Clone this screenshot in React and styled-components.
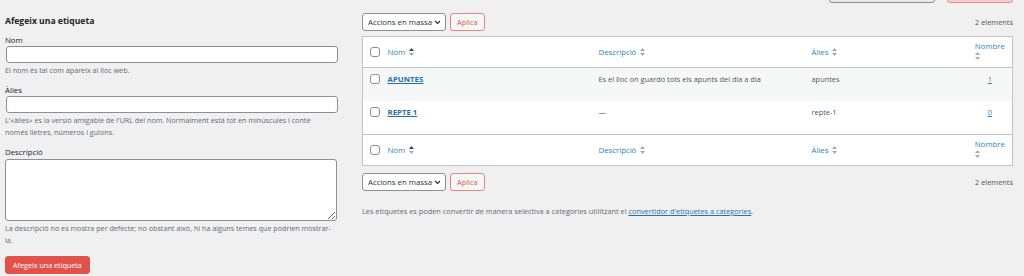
import React from "react";
import styled, { createGlobalStyle } from "styled-components";

const GlobalStyle = createGlobalStyle`
  body {
    margin: 0;
    background: #f0f0f1;
    font-family: "Open Sans", "Noto Sans", sans-serif;
    font-size: 7.8px;
    color: #3c434a;
  }
`;

const Page = styled.div`
  display: flex;
  gap: 25px;
  padding: 0 11px 0 5px;
  height: 276px;
  overflow: hidden;
`;

const LeftCol = styled.div`
  width: 332px;
  flex-shrink: 0;
  padding-top: 15px;
`;

const Heading = styled.h2`
  margin: 0 0 7px;
  font-size: 8.6px;
  line-height: 12px;
  font-weight: 700;
  color: #1d2327;
`;

const Field = styled.div`
  margin-bottom: 7px;
`;

const Label = styled.label`
  display: block;
  color: #1d2327;
  line-height: 12px;
`;

const TextInput = styled.input`
  display: block;
  box-sizing: border-box;
  width: 332px;
  height: 17px;
  margin: 0 0 0 1px;
  border: 1px solid #8c8f94;
  border-radius: 3px;
  background: #fff;
`;

const TextArea = styled.textarea`
  display: block;
  box-sizing: border-box;
  width: 332px;
  height: 62px;
  margin: 1px 0 0;
  border: 1px solid #8c8f94;
  border-radius: 3px;
  background: #fff;
  resize: both;
`;

const Help = styled.p`
  margin: 1px 0 0;
  color: #646970;
  font-size: 7.2px;
  line-height: 12.5px;
`;

const PrimaryButton = styled.button`
  font-family: inherit;
  font-size: 7.2px;
  color: #fff;
  background: #e2524a;
  border: 1px solid #e2524a;
  border-radius: 3px;
  height: 18px;
  padding: 0 7px;
  margin-top: 2px;
`;

const RightCol = styled.div`
  flex: 1;
  display: flex;
  flex-direction: column;
`;

const SearchRow = styled.div`
  display: flex;
  justify-content: flex-end;
  align-items: flex-end;
  gap: 12px;
  height: 3px;
  overflow: hidden;
`;

const SearchBox = styled.div`
  width: 106px;
  height: 20px;
  box-sizing: border-box;
  border: 1px solid #8c8f94;
  background: #e8e8e8;
  border-radius: 3px;
`;

const SearchButton = styled.div`
  width: 66px;
  height: 20px;
  box-sizing: border-box;
  border: 1px solid #f08a84;
  background: #f6cfcc;
  border-radius: 3px;
`;

const NavRow = styled.div`
  display: flex;
  align-items: center;
  gap: 4px;
  margin: ${(p) => p.$margin};
`;

const Select = styled.div`
  display: flex;
  align-items: center;
  justify-content: space-between;
  box-sizing: border-box;
  width: 84px;
  height: 18px;
  padding: 0 4px 0 5px;
  background: #fff;
  border: 1px solid #8c8f94;
  border-radius: 3px;
  color: #2c3338;
  font-size: 7.8px;
  white-space: nowrap;
`;

const ApplyButton = styled.button`
  font-family: inherit;
  font-size: 7.4px;
  color: #e2524a;
  background: #f6f7f7;
  border: 1px solid #e98580;
  border-radius: 3px;
  height: 18px;
  padding: 0 6px;
`;

const Count = styled.span`
  margin-left: auto;
  color: #50575e;
  font-size: 7.4px;
`;

const Table = styled.table`
  width: 651px;
  border-collapse: collapse;
  table-layout: fixed;
  background: #fff;
  border: 1px solid #c3c4c7;
`;

const HeadCell = styled.th`
  text-align: ${(p) => (p.$center ? "center" : "left")};
  font-weight: 400;
  padding: 0 6px;
  height: 31px;
  box-sizing: border-box;
  vertical-align: middle;
  border-${(p) => p.$side}: 1px solid #c3c4c7;
`;

const Row = styled.tr`
  background: ${(p) => (p.$alt ? "#f6f7f7" : "#fff")};
`;

const Cell = styled.td`
  text-align: ${(p) => (p.$center ? "center" : "left")};
  vertical-align: top;
  padding: 6px 6px 0;
  height: 27px;
  color: #50575e;
  font-size: 7.4px;
`;

const CheckCell = styled.td`
  padding: 6px 0 0 7px;
  vertical-align: top;
`;

const CheckHead = styled.th`
  padding: 0 0 0 7px;
  vertical-align: middle;
  border-${(p) => p.$side}: 1px solid #c3c4c7;
`;

const Checkbox = styled.span`
  display: block;
  width: 10px;
  height: 10px;
  box-sizing: border-box;
  border: 1px solid #8c8f94;
  border-radius: 3px;
  background: #fff;
`;

const SortLink = styled.span`
  color: #2a84c2;
  font-size: 7.8px;
  display: inline-flex;
  align-items: center;
  gap: 4px;
`;

const StackedSort = styled.span`
  display: inline-block;
  text-align: left;
  color: #2a84c2;
  font-size: 7.8px;
  line-height: 11px;
`;

const RowTitle = styled.a`
  color: #2271b1;
  font-weight: 700;
  font-size: 7.8px;
  text-decoration: underline;
`;

const NumLink = styled.a`
  color: #2a84c2;
  text-decoration: underline;
`;

const Note = styled.p`
  margin: 15px 0 0;
  color: #646970;
  font-size: 7.35px;
  a {
    color: #2271b1;
    text-decoration: underline;
  }
`;

const SortIcon = ({ active }) => (
  <svg width="5" height="8" viewBox="0 0 5 8">
    <path d="M2.5 0 L5 3 L0 3 Z" fill={active ? "#3c434a" : "#a7aaad"} />
    <path d="M0 5 L5 5 L2.5 8 Z" fill="#a7aaad" />
  </svg>
);

const Chevron = () => (
  <svg width="7" height="5" viewBox="0 0 7 5">
    <path d="M1 1 L3.5 3.5 L6 1" fill="none" stroke="#2c3338" strokeWidth="1.2" />
  </svg>
);

const HeaderRow = ({ side }) => (
  <tr>
    <CheckHead $side={side}>
      <Checkbox />
    </CheckHead>
    <HeadCell $side={side}>
      <SortLink>
        Nom <SortIcon active />
      </SortLink>
    </HeadCell>
    <HeadCell $side={side}>
      <SortLink>
        Descripció <SortIcon />
      </SortLink>
    </HeadCell>
    <HeadCell $side={side}>
      <SortLink>
        Àlies <SortIcon />
      </SortLink>
    </HeadCell>
    <HeadCell $side={side} $center>
      <StackedSort>
        Nombre
        <br />
        <SortIcon />
      </StackedSort>
    </HeadCell>
  </tr>
);

const tags = [
  { name: "APUNTES", desc: "Es el lloc on guardo tots els apunts del dia a dia", slug: "apuntes", count: 1 },
  { name: "REPTE 1", desc: "—", slug: "repte-1", count: 0 },
];

const Bulk = ({ margin }) => (
  <NavRow $margin={margin}>
    <Select>
      Accions en massa <Chevron />
    </Select>
    <ApplyButton>Aplica</ApplyButton>
    <Count>2 elements</Count>
  </NavRow>
);

export default function App() {
  return (
    <>
      <GlobalStyle />
      <Page>
        <LeftCol>
          <Heading>Afegeix una etiqueta</Heading>
          <Field>
            <Label>Nom</Label>
            <TextInput />
            <Help>El nom és tal com apareix al lloc web.</Help>
          </Field>
          <Field>
            <Label>Àlies</Label>
            <TextInput />
            <Help>
              L'«àlies» es la versió amigable de l'URL del nom. Normalment està tot en minúscules i conté
              <br />
              només lletres, números i guions.
            </Help>
          </Field>
          <Field>
            <Label>Descripció</Label>
            <TextArea />
            <Help>
              La descripció no es mostra per defecte; no obstant això, hi ha alguns temes que podrien mostrar-la.
            </Help>
          </Field>
          <PrimaryButton>Afegeix una etiqueta</PrimaryButton>
        </LeftCol>
        <RightCol>
          <SearchRow>
            <SearchBox />
            <SearchButton />
          </SearchRow>
          <Bulk margin="10px 0 5px" />
          <Table>
            <colgroup>
              <col style={{ width: 19 }} />
              <col style={{ width: 211 }} />
              <col style={{ width: 213 }} />
              <col style={{ width: 162 }} />
              <col />
            </colgroup>
            <thead>
              <HeaderRow side="bottom" />
            </thead>
            <tbody>
              {tags.map((t, i) => (
                <Row key={t.slug} $alt={i % 2 === 0}>
                  <CheckCell>
                    <Checkbox />
                  </CheckCell>
                  <Cell>
                    <RowTitle>{t.name}</RowTitle>
                  </Cell>
                  <Cell>{t.desc}</Cell>
                  <Cell>{t.slug}</Cell>
                  <Cell $center>
                    <NumLink>{t.count}</NumLink>
                  </Cell>
                </Row>
              ))}
            </tbody>
            <tfoot>
              <HeaderRow side="top" />
            </tfoot>
          </Table>
          <Bulk margin="7px 0 0" />
          <Note>
            Les etiquetes es poden convertir de manera selectiva a categories utilitzant el{" "}
            <a>convertidor d'etiquetes a categories</a>.
          </Note>
        </RightCol>
      </Page>
    </>
  );
}
